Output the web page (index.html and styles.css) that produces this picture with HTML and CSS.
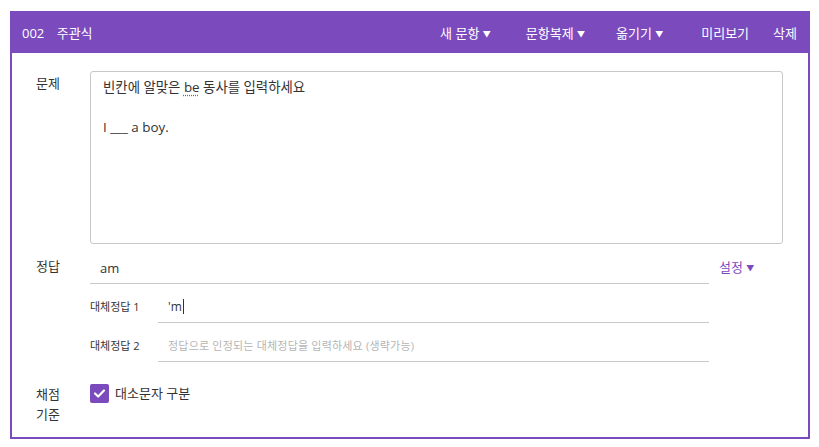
FILE: index.html
```html
<!DOCTYPE html>
<html lang="ko">
<head>
  <meta charset="UTF-8">
  <title>주관식 문항</title>
  <link rel="stylesheet" href="styles.css">
</head>
<body>
  <div class="question-card">
    <div class="card-head">
      <div class="head-title">
        <span class="q-num">002</span>
        <span class="q-type">주관식</span>
      </div>
      <div class="head-menu">
        <span class="menu-item">새 문항 <i class="caret">▼</i></span>
        <span class="menu-item">문항복제 <i class="caret">▼</i></span>
        <span class="menu-item">옮기기 <i class="caret">▼</i></span>
        <span class="menu-item">미리보기</span>
        <span class="menu-item">삭제</span>
      </div>
    </div>

    <div class="card-body">
      <div class="row">
        <div class="label">문제</div>
        <div class="question-box">
          <p>빈칸에 알맞은 <span class="typo">be</span> 동사를 입력하세요</p>
          <p>&nbsp;</p>
          <p>I ___ a boy.</p>
        </div>
      </div>

      <div class="row answer-row">
        <div class="label">정답</div>
        <div class="answers">
          <div class="answer-main">
            <div class="line-input main-input">am</div>
            <span class="setting">설정 <i class="caret">▼</i></span>
          </div>
          <div class="alt-row">
            <span class="alt-label">대체정답 1</span>
            <div class="line-input alt-input">'m<span class="cursor"></span></div>
          </div>
          <div class="alt-row">
            <span class="alt-label">대체정답 2</span>
            <div class="line-input alt-input placeholder">정답으로 인정되는 대체정답을 입력하세요 (생략가능)</div>
          </div>
        </div>
      </div>

      <div class="row grading-row">
        <div class="label">채점<br>기준</div>
        <label class="check">
          <span class="check-box">
            <svg width="13" height="13" viewBox="0 0 13 13"><path d="M2 6.5 L5.2 9.5 L11 3.5" fill="none" stroke="#fff" stroke-width="2.2" stroke-linecap="round" stroke-linejoin="round"/></svg>
          </span>
          대소문자 구분
        </label>
      </div>
    </div>
  </div>
</body>
</html>
```

FILE: styles.css
```css
body {
  margin: 0;
  padding: 11px 9px 8px 10px;
  background: #fff;
  font-family: 'Open Sans', 'Noto Sans CJK KR', sans-serif;
  font-size: 13px;
  color: #333;
}
.question-card {
  width: 800px;
  height: 428px;
  box-sizing: border-box;
  border: 2px solid #7b4abd;
  border-top: none;
}
.card-head {
  display: flex;
  justify-content: space-between;
  align-items: center;
  height: 42px;
  margin: 0 -2px;
  padding: 0 13px 0 12px;
  background: #7b4abd;
  color: #fff;
  font-size: 13px;
}
.q-num {
  margin-right: 9px;
}
.head-menu {
  display: flex;
}
.menu-item:nth-child(2) {
  margin-left: 35px;
}
.menu-item:nth-child(3) {
  margin-left: 31px;
}
.menu-item:nth-child(4) {
  margin-left: 38px;
}
.menu-item:nth-child(5) {
  margin-left: 24px;
}
.caret {
  font-style: normal;
  font-size: 8px;
  vertical-align: 1px;
}
.card-body {
  padding: 18px 25px 0 24px;
}
.row {
  display: flex;
}
.label {
  width: 54px;
  flex-shrink: 0;
  padding-top: 2px;
  line-height: 20px;
}
.question-box {
  width: 693px;
  height: 173px;
  box-sizing: border-box;
  border: 1px solid #c8c8c8;
  border-radius: 3px;
  padding: 5px 12px;
  font-size: 13.4px;
}
.question-box p {
  margin: 0;
  line-height: 20px;
}
.typo {
  text-decoration: underline dotted #e53935;
  text-underline-offset: 3px;
}
.answer-row {
  margin-top: 8px;
}
.answer-row .label {
  padding-top: 4px;
}
.answers {
  flex: 1;
}
.answer-main {
  display: flex;
  align-items: flex-start;
}
.line-input {
  box-sizing: border-box;
  border-bottom: 1px solid #c8c8c8;
  line-height: 16px;
}
.main-input {
  width: 619px;
  height: 32px;
  padding: 8px 10px 0;
}
.setting {
  margin-left: 10px;
  padding-top: 5px;
  color: #7b4abd;
}
.alt-row {
  display: flex;
  align-items: flex-end;
  width: 619px;
}
.alt-label {
  width: 68px;
  flex-shrink: 0;
  font-size: 11px;
  line-height: 16px;
  padding-bottom: 8px;
}
.alt-input {
  flex: 1;
  height: 39px;
  padding: 15px 10px 0;
  font-size: 12px;
}
.placeholder {
  color: #b5b5b5;
  font-size: 11px;
  letter-spacing: 0.2px;
}
.cursor {
  display: inline-block;
  width: 1px;
  height: 15px;
  margin-left: 1px;
  vertical-align: -3px;
  background: #333;
}
.grading-row {
  margin-top: 22px;
}
.grading-row .label {
  padding-top: 0;
}
.check {
  display: flex;
  align-items: flex-start;
  gap: 6px;
  line-height: 19px;
}
.check-box {
  display: flex;
  align-items: center;
  justify-content: center;
  width: 19px;
  height: 19px;
  border-radius: 2px;
  background: #7b4abd;
}
```
